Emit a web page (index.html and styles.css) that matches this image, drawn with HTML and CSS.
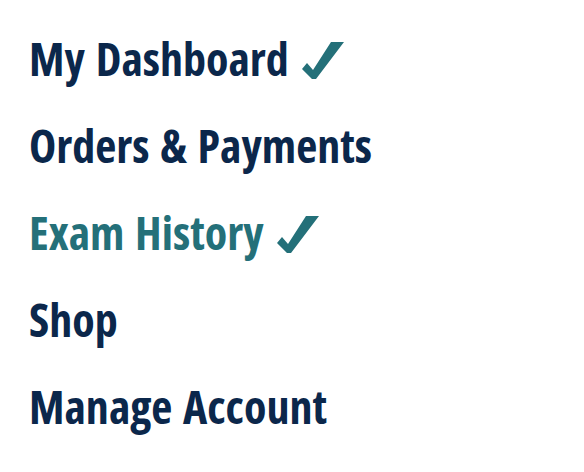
FILE: index.html
```html
<!DOCTYPE html>
<html>
<head>
<meta charset="utf-8">
<link rel="stylesheet" href="styles.css">
</head>
<body>
<nav class="menu">
  <a class="item" href="#">My Dashboard<svg class="check" viewBox="0 0 42 38"><polygon points="0,28 5,22 11,29 29,1 42,1 14,38 10,38" /></svg></a>
  <a class="item" href="#">Orders &amp; Payments</a>
  <a class="item active" href="#">Exam History<svg class="check" viewBox="0 0 42 38"><polygon points="0,28 5,22 11,29 29,1 42,1 14,38 10,38" /></svg></a>
  <a class="item" href="#">Shop</a>
  <a class="item" href="#">Manage Account</a>
</nav>
</body>
</html>
```
FILE: styles.css
```css
html, body {
  margin: 0;
  padding: 0;
  background: #ffffff;
}
.menu {
  display: flex;
  flex-direction: column;
  padding: 15px 0 0 29px;
  font-family: "Open Sans", "Liberation Sans", sans-serif;
  font-weight: 700;
  font-stretch: 75%;
  font-size: 46px;
  line-height: 87px;
  word-spacing: 2.5px;
}
.item {
  color: #0b274b;
  text-decoration: none;
  display: flex;
  align-items: center;
  gap: 13px;
}
.item.active {
  color: #247079;
}
.check {
  width: 42px;
  height: 38px;
  margin-top: 3px;
  fill: #247079;
}
```
